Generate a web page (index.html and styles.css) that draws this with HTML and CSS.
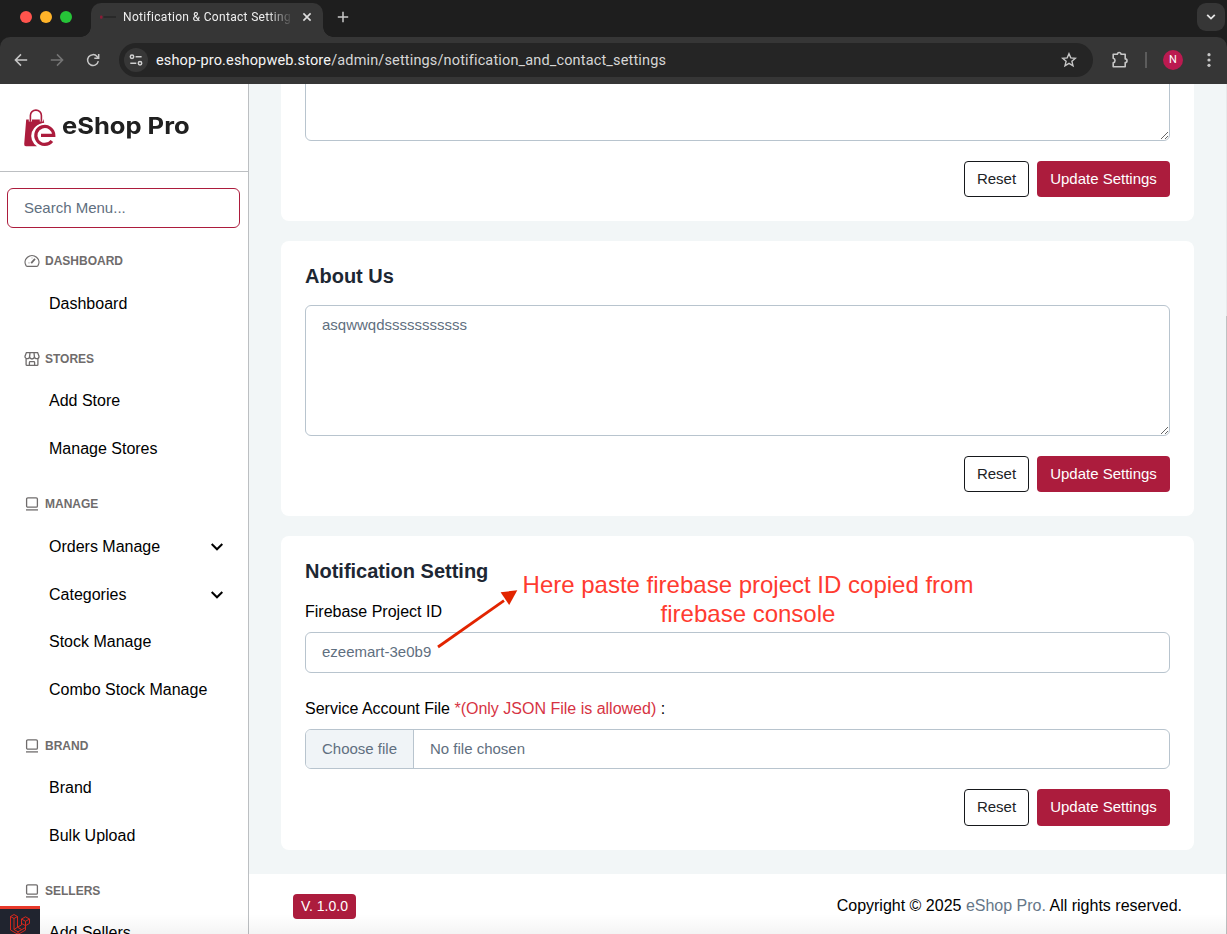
FILE: index.html
```html
<!DOCTYPE html>
<html lang="en">
<head>
<meta charset="utf-8">
<title>Notification &amp; Contact Settings</title>
<link rel="stylesheet" href="styles.css">
</head>
<body>
<svg class="defs" width="0" height="0">
  <symbol id="i-laptop" viewBox="0 0 16 16"><g fill="none" stroke="currentColor" stroke-width="1.3"><rect x="2.6" y="1.9" width="10.8" height="9.2" rx="1.2"/><path d="M2 13.9h12"/></g></symbol>
  <symbol id="i-down" viewBox="0 0 14 10"><path d="M1.7 2l5.3 5.3L12.3 2" fill="none" stroke="currentColor" stroke-width="2"/></symbol>
</svg>
<div class="browser">
  <header class="chrome">
    <div class="tabstrip">
      <div class="lights"><i class="red"></i><i class="yellow"></i><i class="green"></i></div>
      <div class="tab">
        <svg class="favicon" width="18" height="6" viewBox="0 0 18 6"><rect x="1" y="1.5" width="2.5" height="3.2" rx="1" fill="#8b1c37"/><path d="M4.5 3H17" stroke="#222" stroke-width="1.3"/></svg>
        <span class="tab-title">Notification &amp; Contact Setting</span>
        <svg class="tab-close" width="10" height="10" viewBox="0 0 10 10"><path d="M1.4 1.4l7.2 7.2M8.6 1.4L1.4 8.6" stroke="#dedede" stroke-width="1.6"/></svg>
      </div>
      <svg class="new-tab" width="12" height="12" viewBox="0 0 12 12"><path d="M6 .8v10.4M.8 6h10.4" stroke="#c9c9c9" stroke-width="1.5"/></svg>
      <div class="tab-search"><svg width="10" height="8" viewBox="0 0 10 8"><path d="M1.2 1.8L5 5.6l3.8-3.8" fill="none" stroke="#e6e6e6" stroke-width="1.8"/></svg></div>
    </div>
    <div class="toolbar">
      <svg class="nav back" width="14" height="14" viewBox="0 0 14 14"><path d="M13.2 7H1.6M7 1.4L1.4 7 7 12.6" fill="none" stroke="#c7c7c7" stroke-width="1.5"/></svg>
      <svg class="nav forward" width="14" height="14" viewBox="0 0 14 14"><path d="M.8 7h11.6M7 1.4L12.6 7 7 12.6" fill="none" stroke="#757575" stroke-width="1.5"/></svg>
      <svg class="nav reload" width="14" height="14" viewBox="0 0 14 14"><path d="M12.3 8.1A5.4 5.4 0 1 1 11.1 3.5L12.6 5M12.7.9v4.4H8.3" fill="none" stroke="#c7c7c7" stroke-width="1.5"/></svg>
      <div class="omnibox">
        <span class="site-info"><svg width="14" height="12" viewBox="0 0 14 12"><g fill="none" stroke="#d0d0d0" stroke-width="1.5"><circle cx="3" cy="2.8" r="1.7"/><path d="M6.6 2.8h6M1.3 9.2h6"/><circle cx="11" cy="9.2" r="1.7"/></g></svg></span>
        <span class="url">eshop-pro.eshopweb.store<em>/admin/settings/notification_and_contact_settings</em></span>
        <svg class="star" width="16" height="16" viewBox="0 0 16 16"><path d="M8 1.7l1.8 4.2 4.6.4-3.5 3 1.1 4.5L8 11.4l-4 2.4 1.1-4.5-3.5-3 4.6-.4z" fill="none" stroke="#c7c7c7" stroke-width="1.4"/></svg>
      </div>
      <svg class="ext" width="18" height="18" viewBox="0 0 18 18"><path d="M2.2 3.3h4.2a1.8 1.8 0 0 1 3.6 0h4.2v4.6a1.8 1.8 0 0 1 0 3.6v4.3h-12v-4a2.3 2.3 0 0 0 0-4.5z" fill="none" stroke="#c7c7c7" stroke-width="1.6" stroke-linejoin="round"/></svg>
      <i class="sep"></i>
      <span class="avatar">N</span>
      <svg class="dots" width="4" height="16" viewBox="0 0 4 16" fill="#c7c7c7"><circle cx="2" cy="2.7" r="1.6"/><circle cx="2" cy="8" r="1.6"/><circle cx="2" cy="13.3" r="1.6"/></svg>
    </div>
  </header>
  <div class="page">
    <aside class="sidebar">
      <div class="brand">
        <svg width="33" height="38" viewBox="0 0 33 38">
          <path d="M2.2 10.5H19.4L20.5 15A12 12 0 0 0 13 37.2H2Q0 37.2.2 35z" fill="#ac1c3d"/>
          <path d="M6.4 12.5V6.4a5.5 5.3 0 0 1 11 0v6.1" fill="none" stroke="#fff" stroke-width="3.2"/>
          <path d="M6.4 12.8V6.4a5.5 5.3 0 0 1 11 0v6.4" fill="none" stroke="#ac1c3d" stroke-width="1.6"/>
          <circle cx="21" cy="26" r="12.2" fill="#fff"/>
          <path d="M27.9 32A9 9 0 1 1 29.8 26.4H17" fill="none" stroke="#ac1c3d" stroke-width="3.2"/>
        </svg>
        <span class="brand-name">eShop Pro</span>
      </div>
      <input class="search" placeholder="Search Menu...">
      <nav class="menu">
        <section>
          <h6><svg width="16" height="16" viewBox="0 0 16 16"><g fill="none" stroke="currentColor" stroke-width="1.3"><path d="M2.2 12.9A6.9 6.7 0 1 1 13.8 12.9Q13.4 13.3 12.6 13.3H3.4Q2.6 13.3 2.2 12.9z"/><path d="M7.2 10.1L11 5.9" stroke-width="1.8"/><path d="M4.6 9.9h.8M8 4.7v.6" stroke-width="1"/></g></svg>Dashboard</h6>
          <a>Dashboard</a>
        </section>
        <section>
          <h6><svg width="16" height="16" viewBox="0 0 16 16"><g fill="none" stroke="currentColor" stroke-width="1.3"><path d="M2.4 1.6h11.2l1.4 3.6a2.3 2.3 0 0 1-4.6.4 2.4 2.4 0 0 1-4.8 0A2.3 2.3 0 0 1 1 5.2zM5.6 5.6l.4-4M10.4 5.6l-.4-4M2.1 7.2v6.3q0 .9.9.9h10q.9 0 .9-.9V7.2M5.4 14.2v-2.8q0-.8.8-.8h3.6q.8 0 .8.8v2.8"/></g></svg>Stores</h6>
          <a>Add Store</a><a>Manage Stores</a>
        </section>
        <section>
          <h6><svg width="16" height="16"><use href="#i-laptop"/></svg>Manage</h6>
          <a>Orders Manage<svg width="14" height="10"><use href="#i-down"/></svg></a>
          <a>Categories<svg width="14" height="10"><use href="#i-down"/></svg></a>
          <a>Stock Manage</a><a>Combo Stock Manage</a>
        </section>
        <section>
          <h6><svg width="16" height="16"><use href="#i-laptop"/></svg>Brand</h6>
          <a>Brand</a><a>Bulk Upload</a>
        </section>
        <section>
          <h6><svg width="16" height="16"><use href="#i-laptop"/></svg>Sellers</h6>
          <a>Add Sellers</a>
        </section>
      </nav>
    </aside>
    <div class="main">
      <main class="content">
        <section class="card">
          <textarea></textarea>
          <div class="actions"><button class="btn reset">Reset</button><button class="btn update">Update Settings</button></div>
        </section>
        <section class="card">
          <h5>About Us</h5>
          <textarea>asqwwqdsssssssssss</textarea>
          <div class="actions"><button class="btn reset">Reset</button><button class="btn update">Update Settings</button></div>
        </section>
        <section class="card notify">
          <h5>Notification Setting</h5>
          <label class="first">Firebase Project ID</label>
          <input class="field" value="ezeemart-3e0b9">
          <label class="second">Service Account File <span class="req">*(Only JSON File is allowed)</span> :</label>
          <div class="file"><span class="choose">Choose file</span><span class="chosen">No file chosen</span></div>
          <div class="actions tall"><button class="btn reset">Reset</button><button class="btn update">Update Settings</button></div>
        </section>
      </main>
      <footer class="footer">
        <span class="version">V. 1.0.0</span>
        <p class="copyright">Copyright © 2025 <a>eShop Pro.</a> All rights reserved.</p>
      </footer>
    </div>
    <i class="scrollbar"></i>
    <i class="bottom-fade"></i>
    <div class="debugbar"><svg width="22" height="24" viewBox="0 0 22 24"><path d="M1.5 3.5L5 1.5l3.5 2v10.7l4-2.3V6l4-2.2 4 2.2v4.4l-4 2.3v4.4L9 21.4 1.5 17zM1.5 3.5l3.5 2 3.5-2M5 5.5v11l4 2.3 7.5-4.3M5 16.5l3.5-2.3M9 18.8v2.6M12.5 6l4 2.3 4-2.3M16.5 8.3v4.4l-4-2.3M8.5 14.2l4 2.3" fill="none" stroke="#e8281c" stroke-width=".9"/></svg></div>
    <svg class="arrow" width="84" height="64" viewBox="0 0 84 64"><path d="M2 62L68 15.7" stroke="#e22400" stroke-width="2.8"/><path d="M81.3 5.3L73.2 20L64.6 7.2z" fill="#e22400"/></svg>
    <p class="note">Here paste firebase project ID copied from<br>firebase console</p>
  </div>
</div>
</body>
</html>
```

FILE: styles.css
```css
* { box-sizing: border-box; }
body { margin: 0; font-family: "Liberation Sans", Arial, sans-serif; color: #000; }
h5, h6, p { margin: 0; }
svg { display: block; flex: none; }
.defs { position: absolute; }
.browser { width: 1227px; height: 934px; overflow: hidden; display: flex; flex-direction: column; }

/* browser window */
.chrome { flex: none; height: 84px; background: #1e1e1e; font-family: Roboto, sans-serif; }
.tabstrip { height: 37px; display: flex; align-items: flex-start; }
.lights { display: flex; gap: 8px; padding: 11px 0 0 20px; width: 91px; }
.lights i { width: 12px; height: 12px; border-radius: 50%; }
.red { background: #ff544d; }
.yellow { background: #ffb429; }
.green { background: #26c438; }
.tab { position: relative; width: 232px; height: 34px; margin-top: 3px; background: #363636; border-radius: 10px 10px 0 0; display: flex; align-items: center; padding: 0 11px 6px 8px; }
.tab::before, .tab::after { content: ""; position: absolute; bottom: 0; width: 10px; height: 10px; }
.tab::before { left: -10px; background: radial-gradient(circle at 0 0, transparent 9.5px, #363636 10px); }
.tab::after { right: -10px; background: radial-gradient(circle at 100% 0, transparent 9.5px, #363636 10px); }
.favicon { margin-right: 6px; }
.tab-title { width: 168px; white-space: nowrap; font-size: 12px; font-weight: 400; letter-spacing: .32px; color: #efefef; -webkit-mask-image: linear-gradient(90deg, #000 145px, transparent 170px); mask-image: linear-gradient(90deg, #000 145px, transparent 170px); }
.tab-close { margin-left: 11px; }
.new-tab { margin: 11px 0 0 14px; }
.tab-search { margin: 3px 2px 0 auto; width: 28px; height: 28px; border-radius: 9px; background: #363636; display: grid; place-items: center; }
.toolbar { height: 47px; background: #363636; border-radius: 10px 10px 0 0; display: flex; align-items: center; padding: 0 0 1px 14px; }
.forward { margin-left: 22px; }
.reload { margin-left: 22px; }
.omnibox { flex: none; margin-left: 19px; width: 974px; height: 34px; border-radius: 17px; background: #252525; display: flex; align-items: center; padding: 0 16px 0 5px; }
.site-info { width: 24px; height: 24px; border-radius: 50%; background: #373737; display: grid; place-items: center; }
.url { margin-left: 8px; font-size: 14.5px; font-weight: 400; color: #f4f4f4; letter-spacing: .15px; white-space: nowrap; }
.url em { font-style: normal; color: #d6d6d6; }
.star { margin-left: auto; }
.ext { margin-left: 18px; }
.sep { width: 1.5px; height: 16px; background: #5c5c5c; margin-left: 16px; }
.avatar { width: 20px; height: 20px; margin-left: 16.5px; border-radius: 50%; background: #bb1a50; color: #fff; font-size: 11px; font-weight: 400; line-height: 20px; text-align: center; }
.dots { margin-left: 24px; }

.page { position: relative; flex: 1; display: flex; background: #fff; overflow: hidden; }

/* sidebar */
.sidebar { width: 249px; flex: none; border-right: 1px solid #bcbfc2; overflow: hidden; }
.brand { height: 88px; border-bottom: 1px solid #bcbfc2; padding: 25px 0 0 24px; display: flex; align-items: flex-start; }
.brand-name { margin: 2px 0 0 5px; font: 700 23px/30px Inter, sans-serif; color: #202020; white-space: nowrap; transform: scaleX(1.11); transform-origin: 0 50%; }
.search { display: block; width: 233px; height: 40px; margin: 16px 0 0 7px; padding: 0 16px 2px; border: 1px solid #ac1c3d; border-radius: 6px; font: 15px "Liberation Sans", Arial, sans-serif; outline: 0; }
.search::placeholder { color: #5f6f80; opacity: 1; }
.menu { padding-top: 15.2px; }
.menu section { margin-bottom: 14px; }
.menu h6 { height: 36px; display: flex; align-items: center; gap: 5px; padding-left: 24px; font-size: 12px; font-weight: 700; text-transform: uppercase; color: #6f6c6c; }
.menu a { height: 47.78px; display: flex; align-items: center; justify-content: space-between; padding: 1px 24px 0 49px; font-size: 16px; white-space: nowrap; }

/* content */
.main { flex: 1; display: flex; flex-direction: column; }
.content { height: 790px; background: #f2f6f7; padding: 0 33px 24px 32px; display: flex; flex-direction: column; justify-content: flex-end; gap: 20px; overflow: hidden; }
.card { flex: none; background: #fff; border-radius: 8px; padding: 24px; }
.card h5 { height: 24px; font-size: 20px; line-height: 22px; font-weight: 700; color: #1d2733; }
textarea, .field { display: block; width: 100%; border: 1px solid #b8c4ce; border-radius: 6px; background: #fff; color: #5f6f80; font: 15px "Liberation Sans", Arial, sans-serif; outline: 0; }
textarea { height: 131px; padding: 10px 16px; resize: vertical; }
.card h5 + textarea { margin-top: 16px; }
.actions { display: flex; justify-content: flex-end; gap: 8px; margin-top: 20px; height: 36px; }
.actions.tall { height: 37px; }
.btn { border-radius: 4px; padding: 0 0 2px; font: 15px "Liberation Sans", Arial, sans-serif; }
.reset { width: 65px; border: 1px solid #16181b; background: #fff; color: #202326; }
.update { width: 133px; border: 0; background: #ac1c3d; color: #fff; }
label { display: block; font-size: 16px; line-height: 24px; }
.first { margin-top: 16px; }
.second { margin-top: 24px; }
.req { color: #d63343; }
.field { height: 41px; margin-top: 8px; padding: 0 16px 2px; }
.file { height: 40px; margin-top: 8px; border: 1px solid #b8c4ce; border-radius: 6px; display: flex; overflow: hidden; font-size: 15px; line-height: 38px; color: #5f6f80; }
.choose { width: 108px; padding-left: 16px; background: #f0f4f7; border-right: 1px solid #b8c4ce; }
.chosen { padding-left: 16px; }
.footer { height: 60px; display: flex; align-items: center; justify-content: space-between; padding: 4px 45px 0 44px; }
.version { width: 63px; height: 25px; border-radius: 4px; background: #ac1c3d; color: #fff; font-size: 14px; line-height: 25px; text-align: center; }
.copyright { font-size: 16px; }
.copyright a { color: #667788; }

/* overlays */
.scrollbar { position: absolute; top: 0; right: 0; width: 1px; height: 850px; background: linear-gradient(#e8e9ea 232px, #bfc1c2 232px); }
.bottom-fade { position: absolute; left: 0; right: 0; bottom: 0; height: 20px; background: linear-gradient(transparent, rgba(0,0,0,.045)); }
.debugbar { position: absolute; left: 0; bottom: 0; width: 40px; height: 28px; border-top: 3px solid #e8392a; background: #20242f; padding: 4px 0 0 9px; overflow: hidden; }
.arrow { position: absolute; left: 436px; top: 501px; }
.note { position: absolute; left: 498px; top: 486px; width: 500px; text-align: center; font-size: 24px; line-height: 29px; color: #ff3b30; white-space: nowrap; }
```
